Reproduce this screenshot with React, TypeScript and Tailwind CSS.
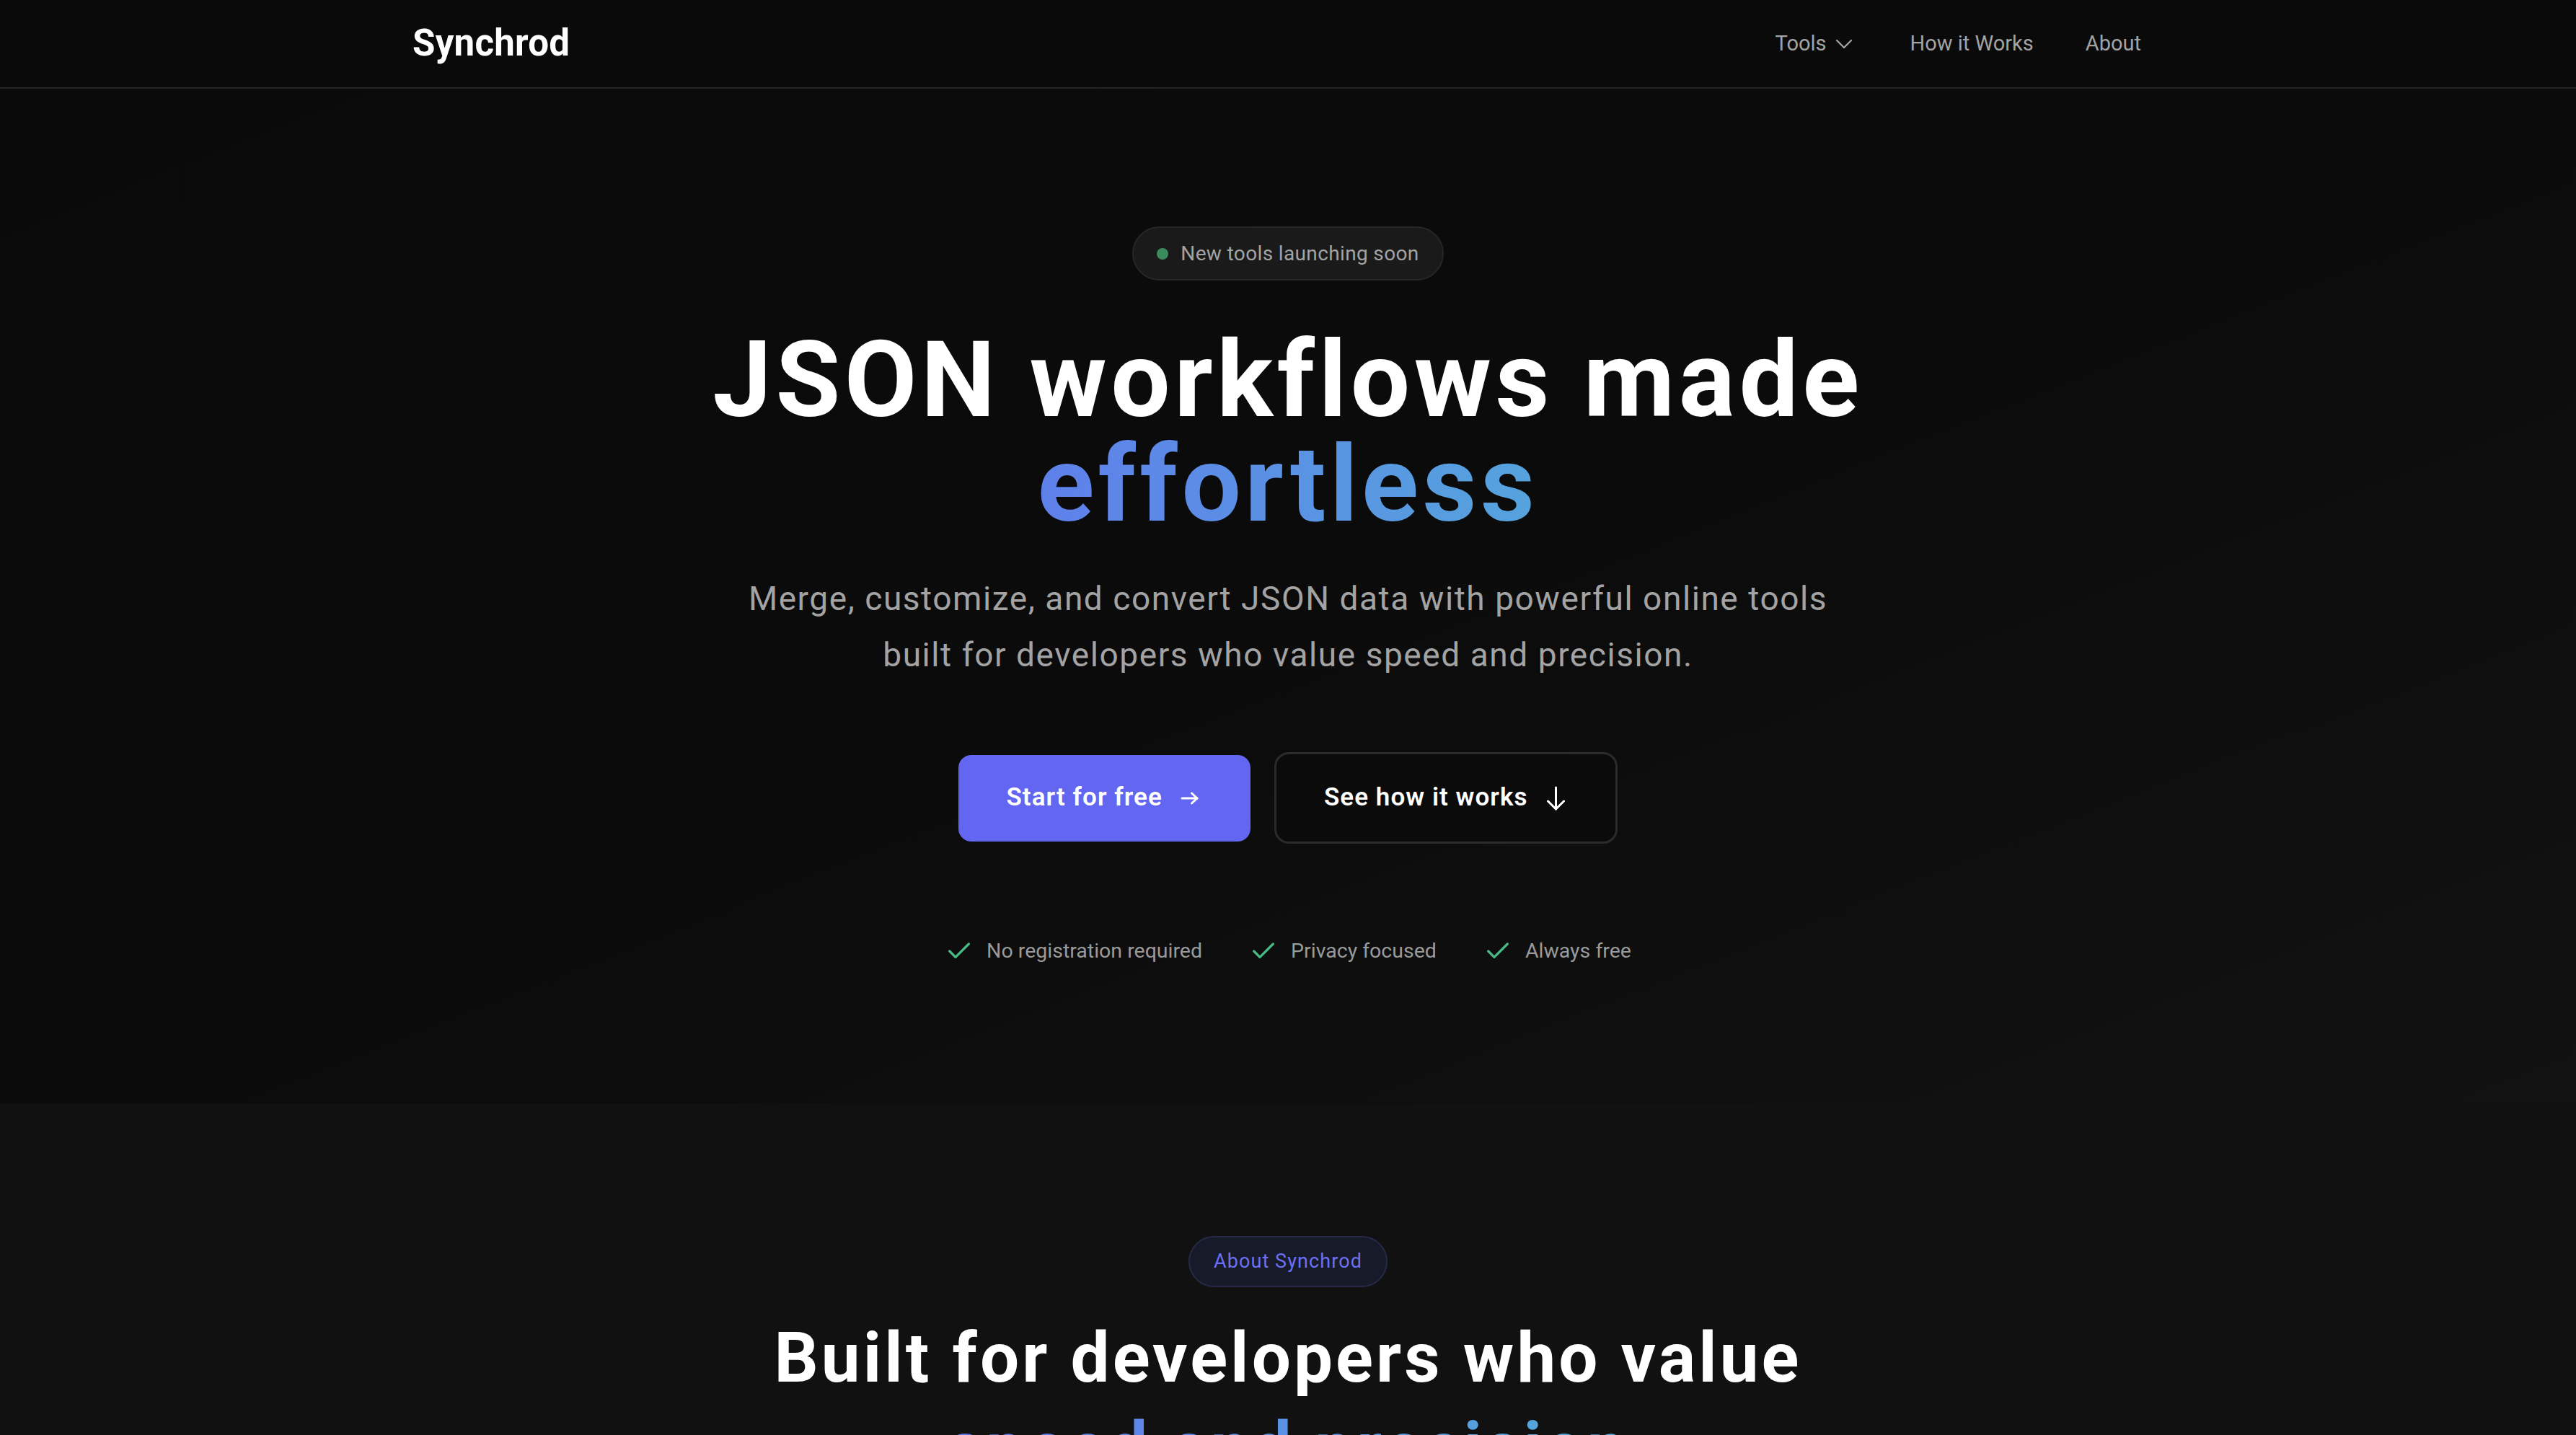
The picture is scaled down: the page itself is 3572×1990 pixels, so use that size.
import React from "react";
import { ChevronDown, Check } from "lucide-react";

const font = { fontFamily: "Roboto, 'Liberation Sans', Arial, sans-serif" };

function ArrowRightIcon() {
  return (
    <svg width="25" height="18" viewBox="0 0 25 18" fill="none" stroke="currentColor" strokeWidth="3" strokeLinecap="round" strokeLinejoin="round">
      <path d="M2 9h21" />
      <path d="M15.5 2 23 9l-7.5 7" />
    </svg>
  );
}

function ArrowDownIcon() {
  return (
    <svg width="27" height="34" viewBox="0 0 27 34" fill="none" stroke="currentColor" strokeWidth="3" strokeLinecap="round" strokeLinejoin="round">
      <path d="M13.5 2v30" />
      <path d="M2.5 21 13.5 32l11-11" />
    </svg>
  );
}

function Nav() {
  return (
    <header className="h-[123px] border-b-2 border-[#242424] bg-[#0a0a0a]">
      <div className="flex h-full items-center justify-between pl-[572px] pr-[603px]">
        <div className="text-[51px] font-bold tracking-[0.005em] text-white">Synchrod</div>
        <nav className="flex items-center gap-[72px] text-[29px] text-[#a3a3a3]">
          <div className="flex items-center gap-[4px]">
            <span>Tools</span>
            <ChevronDown size={40} strokeWidth={1.4} />
          </div>
          <span>How it Works</span>
          <span>About</span>
        </nav>
      </div>
    </header>
  );
}

function Hero() {
  return (
    <section className="flex flex-col items-center bg-linear-to-br from-[#0a0a0a] via-[#0b0b0b] to-[#121212] pt-[191px] pb-[192px]">
      <div className="flex h-[75px] items-center gap-[17px] rounded-full border-2 border-[#262626] bg-[#1a1a1a] px-[32px]">
        <span className="h-[16px] w-[16px] rounded-full bg-[#3b8a5e]" />
        <span className="text-[28px] tracking-[0.013em] text-[#a3a3a3]">New tools launching soon</span>
      </div>
      <h1 className="mt-[66px] text-center text-[146px] font-bold leading-[145px] tracking-[0.038em] text-white">
        <span className="block">JSON workflows made</span>
        <span className="block bg-linear-to-r from-[#6366f1] to-[#4db8d3] bg-clip-text text-transparent">
          effortless
        </span>
      </h1>
      <p className="mt-[46px] text-center text-[46px] leading-[78px] tracking-[0.034em] text-[#a3a3a3]">
        <span className="block">Merge, customize, and convert JSON data with powerful online tools</span>
        <span className="block">built for developers who value speed and precision.</span>
      </p>
      <div className="mt-[96px] flex items-center gap-[33px]">
        <button className="flex h-[120px] items-center gap-[25px] rounded-[18px] bg-[#6366f1] pl-[66px] pr-[72px] text-[35px] font-semibold tracking-[0.03em] text-white">
          <span>Start for free</span>
          <ArrowRightIcon />
        </button>
        <button className="flex h-[127px] items-center gap-[25px] rounded-[20px] border-[3px] border-[#2b2b2b] bg-[#0b0b0b] pl-[66px] pr-[69px] text-[35px] font-semibold tracking-[0.03em] text-white">
          <span>See how it works</span>
          <ArrowDownIcon />
        </button>
      </div>
      <div className="mt-[129px] flex h-[40px] items-center gap-[65px] text-[28.5px] text-[#9a9a9a]">
        {["No registration required", "Privacy focused", "Always free"].map((t) => (
          <div key={t} className="flex items-center gap-[18px]">
            <Check size={40} strokeWidth={2} className="text-[#46b985]" />
            <span>{t}</span>
          </div>
        ))}
      </div>
    </section>
  );
}

function About() {
  return (
    <section className="flex flex-col items-center bg-[#111111] pt-[183px] pb-[120px]">
      <div className="flex h-[71px] items-center rounded-full border-2 border-[#262a48] bg-[#171a28] px-[33px] text-[27px] tracking-[0.04em] text-[#6c70f2]">
        About Synchrod
      </div>
      <h2 className="mt-[36px] text-center text-[96px] font-bold leading-[124px] tracking-[0.043em] text-white">
        <span className="block">Built for developers who value</span>
        <span className="block bg-linear-to-r from-[#6366f1] to-[#4db8d3] bg-clip-text text-transparent">
          speed and precision
        </span>
      </h2>
    </section>
  );
}

export default function App() {
  return (
    <div style={font} className="min-h-screen bg-[#111111]">
      <Nav />
      <Hero />
      <About />
    </div>
  );
}
